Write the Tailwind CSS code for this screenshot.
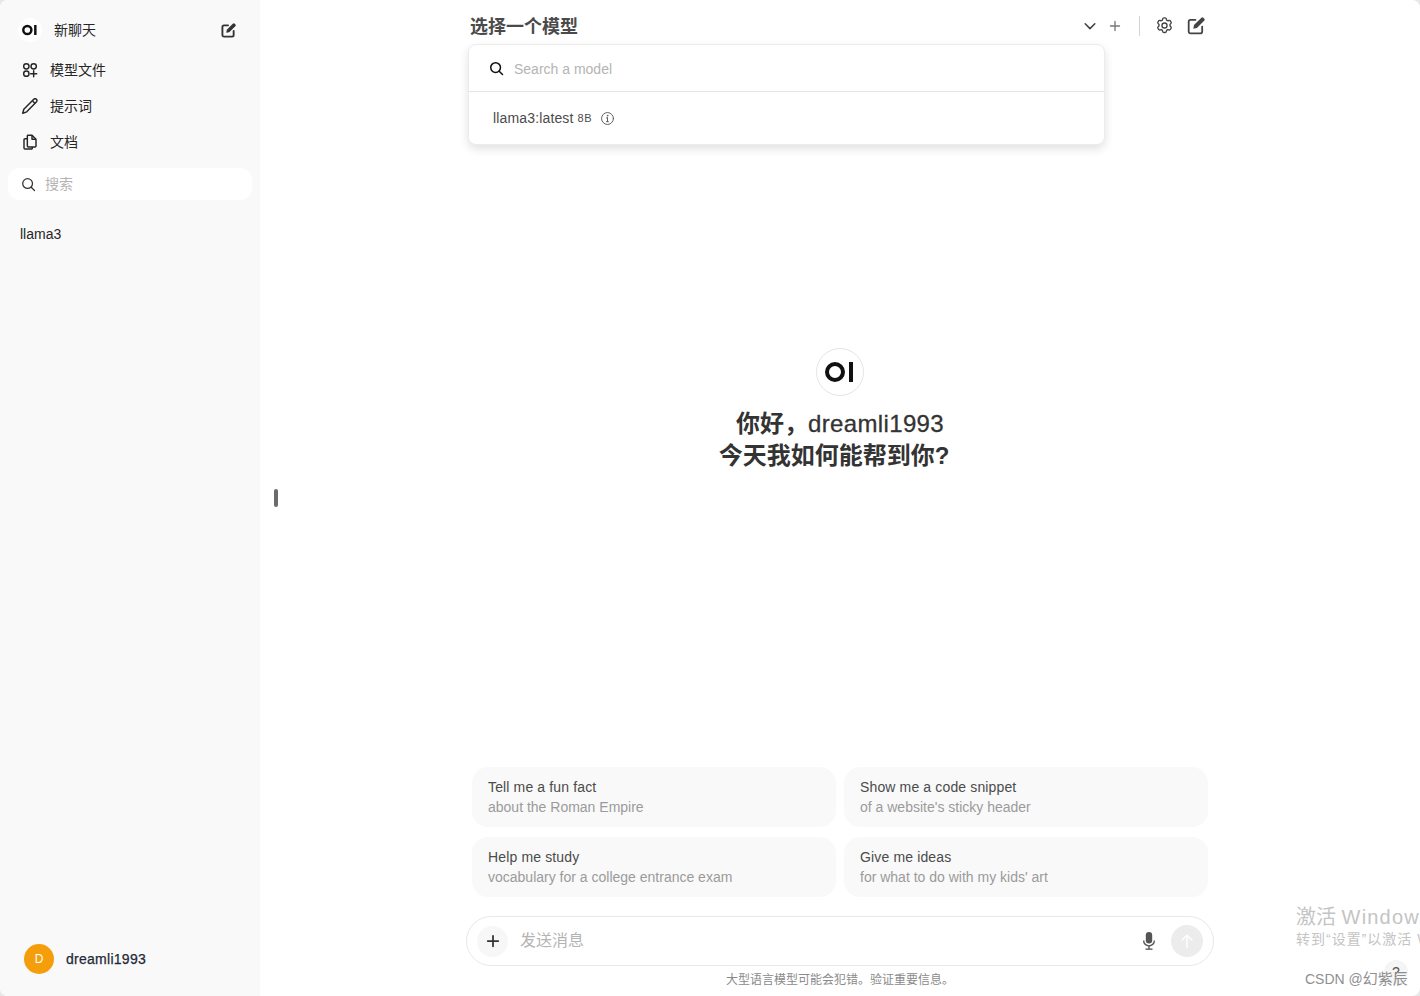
<!DOCTYPE html>
<html lang="en">

<head>
    <meta charset="UTF-8" />
    <title>Open WebUI</title>
    <script src="https://cdn.jsdelivr.net/npm/@tailwindcss/browser@4"></script>
</head>

<body class="bg-[#e8e8e8] h-[996px] w-[1420px] overflow-hidden font-['Liberation_Sans','Noto_Sans_CJK_SC',sans-serif]">
    <div class="relative flex h-full w-full overflow-hidden rounded-lg bg-white text-[#262626]">

        <!-- sidebar -->
        <aside class="flex h-full w-[260px] shrink-0 flex-col bg-[#f9f9f9] px-2 text-sm">
            <div class="mt-[14px] flex h-8 items-center pl-[10px] pr-[16px]">
                <div class="flex h-6 w-6 items-center justify-center rounded-full bg-white">
                    <svg class="h-[12px] w-[16px]" viewBox="0 0 30 22" fill="none" stroke="#111" stroke-width="4.6">
                        <circle cx="10" cy="11" r="7.6" />
                        <path d="M25 1.500v19" />
                    </svg>
                </div>
                <span class="ml-[12px] flex-1">新聊天</span>
                <svg class="h-[15px] w-[15px]" viewBox="0 0 16 16">
                    <path d="M7.500 2.500H3.200A1.700 1.700 0 0 0 1.500 4.200v8.600a1.700 1.700 0 0 0 1.700 1.700h8.600a1.700 1.700 0 0 0 1.700-1.700V8.500" fill="none" stroke="#333" stroke-width="2" stroke-linecap="round" />
                    <path d="M12.600 0.800a1.500 1.500 0 0 1 2.100 0l.5.5a1.500 1.500 0 0 1 0 2.100L8.800 9.800 5.600 10.400l.6-3.200z" fill="#333" />
                </svg>
            </div>

            <nav class="mt-[6px] flex flex-col">
                <a class="flex h-9 items-center gap-[12px] px-[14px]">
                    <svg class="h-4 w-4" viewBox="0 0 24 24" fill="none" stroke="#262626" stroke-width="2.2" stroke-linecap="round">
                        <circle cx="6.500" cy="6.500" r="4" />
                        <circle cx="17.500" cy="6.500" r="4" />
                        <circle cx="6.500" cy="17.500" r="4" />
                        <path d="M17.500 13v9M13 17.500h9" />
                    </svg>
                    <span>模型文件</span>
                </a>
                <a class="flex h-9 items-center gap-[12px] px-[14px]">
                    <svg class="h-4 w-4" viewBox="1 1 22 22" fill="none" stroke="#262626" stroke-width="2" stroke-linejoin="round">
                        <path d="M17.500 2.500a2.500 2.500 0 0 1 3.500 3.500L7.500 20 2 22l1.500-5.500z" />
                        <path d="M15.500 5l3.500 3.500" />
                    </svg>
                    <span>提示词</span>
                </a>
                <a class="flex h-9 items-center gap-[12px] px-[14px]">
                    <svg class="h-4 w-4" viewBox="0 0 24 24" fill="none" stroke="#262626" stroke-width="2.200" stroke-linejoin="round">
                        <path d="M9 2h6l6 6v10a1.500 1.500 0 0 1-1.500 1.500h-10A1.500 1.500 0 0 1 8 18V3a1 1 0 0 1 1-1z" />
                        <path d="M15 2v6h6" />
                        <path d="M8 7H4.500A1.500 1.500 0 0 0 3 8.500V21a1.500 1.500 0 0 0 1.500 1.500H14a1.500 1.500 0 0 0 1.500-1.500v-1.500" />
                    </svg>
                    <span>文档</span>
                </a>
            </nav>

            <div class="mt-[8px] flex h-8 items-center gap-[9px] rounded-xl bg-white px-[13px]">
                <svg class="h-[15px] w-[15px]" viewBox="0 0 20 20" fill="none" stroke="#333" stroke-width="1.700" stroke-linecap="round">
                    <circle cx="8.800" cy="8.800" r="6.500" />
                    <path d="M13.600 13.600L18 18" />
                </svg>
                <span class="text-[#b4b4b4]">搜索</span>
            </div>

            <div class="mt-[24px] px-[12px] leading-5">llama3</div>

            <div class="mt-auto mb-[22px] flex items-center gap-[12px] pl-[16px]">
                <div class="flex h-[30px] w-[30px] items-center justify-center rounded-full bg-[#f59e0b] text-xs text-white">D</div>
                <span class="font-medium tracking-[0.27px] text-[#1f2937] [-webkit-text-stroke:0.25px_#1f2937]">dreamli1993</span>
            </div>
        </aside>

        <!-- main column -->
        <main class="relative flex h-full flex-1 flex-col items-center">
            <div class="absolute left-[14px] top-[489px] h-[18px] w-1 rounded-full bg-[#6b6b6b]"></div>

            <header class="flex h-[52px] w-[740px] shrink-0 items-center justify-between pb-[1px] pr-[5px]">
                <span class="mt-[2px] text-lg font-bold text-[#4a4a4a]">选择一个模型</span>
                <div class="flex items-center">
                    <svg class="h-[14px] w-[14px]" viewBox="0 0 16 16" fill="none" stroke="#444" stroke-width="1.800" stroke-linecap="round" stroke-linejoin="round">
                        <path d="M2.500 5.500L8 11l5.500-5.500" />
                    </svg>
                    <svg class="ml-[12px] h-3 w-3" viewBox="0 0 16 16" fill="none" stroke="#777" stroke-width="1.800" stroke-linecap="round">
                        <path d="M8 2v12M2 8h12" />
                    </svg>
                    <div class="ml-[18px] h-5 w-px bg-[#d4d4d4]"></div>
                    <svg class="ml-[15px] h-[19px] w-[19px]" viewBox="0 0 24 24" fill="none" stroke="#444" stroke-width="1.700" stroke-linejoin="round">
                        <path d="M9.600 3.900c.1-.9.900-1.600 1.800-1.600h1.200c.9 0 1.700.7 1.800 1.600l.2 1.200c.6.300 1.100.6 1.600 1l1.200-.4c.9-.3 1.800 0 2.200.8l.6 1c.5.800.3 1.800-.4 2.400l-.9.8c.1.600.1 1.200 0 1.800l.9.800c.7.600.9 1.600.4 2.400l-.6 1c-.4.800-1.300 1.100-2.200.8l-1.200-.4c-.5.400-1 .7-1.600 1l-.2 1.200c-.1.900-.9 1.600-1.800 1.600h-1.200c-.9 0-1.700-.7-1.800-1.600l-.2-1.200c-.6-.3-1.100-.6-1.600-1l-1.200.4c-.9.300-1.800 0-2.200-.8l-.6-1c-.5-.800-.3-1.800.4-2.400l.9-.8c-.1-.6-.1-1.200 0-1.800l-.9-.8c-.7-.6-.9-1.600-.4-2.400l.6-1c.4-.8 1.300-1.100 2.200-.8l1.200.4c.5-.4 1-.7 1.600-1z" />
                        <circle cx="12" cy="12" r="3.200" />
                    </svg>
                    <svg class="ml-[13px] h-[18px] w-[18px]" viewBox="0 0 16 16">
                        <path d="M7.500 2.500H3.200A1.700 1.700 0 0 0 1.500 4.200v8.600a1.700 1.700 0 0 0 1.700 1.700h8.600a1.700 1.700 0 0 0 1.700-1.700V8.500" fill="none" stroke="#444" stroke-width="1.600" stroke-linecap="round" />
                        <path d="M12.600 0.800a1.500 1.500 0 0 1 2.100 0l.5.5a1.500 1.500 0 0 1 0 2.100L8.800 9.800 5.600 10.400l.6-3.200z" fill="#444" />
                    </svg>
                </div>
            </header>

            <!-- model dropdown -->
            <div class="absolute left-[208px] top-[44px] w-[637px] rounded-lg border border-[#ececec] bg-white shadow-[0_4px_10px_rgba(0,0,0,0.12)]">
                <div class="flex h-[47px] items-center gap-[10px] border-b border-[#e5e5e5] px-5">
                    <svg class="h-[15px] w-[15px]" viewBox="0 0 20 20" fill="none" stroke="#111" stroke-width="2" stroke-linecap="round">
                        <circle cx="8.800" cy="8.800" r="6.500" />
                        <path d="M13.600 13.600L18 18" />
                    </svg>
                    <span class="mt-[2px] text-sm text-[#b4b4b4]">Search a model</span>
                </div>
                <div class="flex h-[52px] items-center px-6 text-sm text-[#4b4b4b]">
                    <span class="tracking-[0.15px]">llama3:latest</span>
                    <span class="ml-1 mt-[2px] text-[11px] tracking-[0.5px]">8B</span>
                    <svg class="ml-[8px] h-[15px] w-[15px]" viewBox="0 0 24 24" fill="none" stroke="#555" stroke-width="1.500" stroke-linecap="round">
                        <circle cx="12" cy="12" r="9.500" />
                        <path d="M12 11v6M10.500 11H12M10.500 17h3" />
                        <circle cx="12" cy="7.500" r="0.600" />
                    </svg>
                </div>
            </div>

            <!-- greeting -->
            <section class="mt-[296px] flex flex-col items-center text-2xl leading-8 text-[#333]">
                <div class="mb-[12px] flex h-12 w-12 items-center justify-center rounded-full border border-[#e5e5e5] bg-white">
                    <svg class="h-[22px] w-[30px]" viewBox="0 0 30 22" fill="none" stroke="#111" stroke-width="4">
                        <circle cx="10" cy="11" r="8" />
                        <path d="M26 1v20" />
                    </svg>
                </div>
                <div class="font-medium"><span class="font-bold">你好，</span><span class="tracking-[0.36px] [-webkit-text-stroke:0.3px_#333]">dreamli1993</span></div>
                <div class="pr-[12px] font-bold">今天我如何能帮到你?</div>
            </section>

            <!-- suggestions -->
            <section class="mt-auto grid w-[736px] grid-cols-2 gap-x-2 gap-y-[10px] text-sm leading-5">
                <div class="h-[60px] rounded-2xl bg-[#f9f9f9] px-4 py-[10px]">
                    <div class="tracking-[0.14px] text-[#4b4b4b]">Tell me a fun fact</div>
                    <div class="text-[#9b9b9b]">about the Roman Empire</div>
                </div>
                <div class="h-[60px] rounded-2xl bg-[#f9f9f9] px-4 py-[10px]">
                    <div class="tracking-[0.14px] text-[#4b4b4b]">Show me a code snippet</div>
                    <div class="text-[#9b9b9b]">of a website's sticky header</div>
                </div>
                <div class="h-[60px] rounded-2xl bg-[#f9f9f9] px-4 py-[10px]">
                    <div class="tracking-[0.14px] text-[#4b4b4b]">Help me study</div>
                    <div class="text-[#9b9b9b]">vocabulary for a college entrance exam</div>
                </div>
                <div class="h-[60px] rounded-2xl bg-[#f9f9f9] px-4 py-[10px]">
                    <div class="tracking-[0.14px] text-[#4b4b4b]">Give me ideas</div>
                    <div class="text-[#9b9b9b]">for what to do with my kids' art</div>
                </div>
            </section>

            <!-- message box -->
            <div class="mt-[19px] flex h-[50px] w-[748px] shrink-0 items-center rounded-[25px] border border-[#e8e8e8] bg-white pl-[10px] pr-[10px]">
                <div class="flex h-[31px] w-[31px] items-center justify-center rounded-full bg-[#f7f7f7]">
                    <svg class="h-[14px] w-[14px]" viewBox="0 0 16 16" fill="none" stroke="#333" stroke-width="2" stroke-linecap="round">
                        <path d="M8 2v12M2 8h12" />
                    </svg>
                </div>
                <span class="ml-[12px] flex-1 text-base text-[#b4b4b4]">发送消息</span>
                <svg class="h-[20px] w-[20px]" viewBox="0 0 20 20" fill="#555">
                    <rect x="6.800" y="1" width="6.400" height="11.500" rx="3.200" />
                    <path d="M4 9.500h1.300a4.700 4.700 0 0 0 9.400 0H16a6 6 0 0 1-5.300 5.900V18h-1.400v-2.600A6 6 0 0 1 4 9.500z" />
                    <rect x="6.500" y="17.500" width="7" height="1.300" />
                </svg>
                <div class="ml-[12px] flex h-8 w-8 items-center justify-center rounded-full bg-[#ececec]">
                    <svg class="h-[18px] w-[18px]" viewBox="0 0 20 20" fill="none" stroke="#fff" stroke-width="1.600" stroke-linecap="round" stroke-linejoin="round">
                        <path d="M10 17V3.500M4.500 9L10 3.500 15.500 9" />
                    </svg>
                </div>
            </div>
            <div class="flex h-[30px] shrink-0 items-center pb-[2px] text-xs text-[#8a8a8a]">大型语言模型可能会犯错。验证重要信息。</div>
        </main>

        <!-- windows watermark and csdn tag lie over the page -->
        <div class="absolute left-[1296px] top-[903px] w-[124px] overflow-hidden whitespace-nowrap text-[#c4c4c4]">
            <div class="text-[20px] leading-7">激活 <span class="tracking-[1.2px]">Windows</span></div>
            <div class="mt-[-2px] text-sm leading-5 tracking-[1px]">转到“设置”以激活 Windows。</div>
        </div>
        <div class="absolute left-[1384px] top-[960px] flex h-6 w-6 items-center justify-center rounded-full bg-[#f5f5f5] text-sm text-[#555]">?</div>
        <div class="absolute left-[1305px] top-[969px] text-sm leading-5 text-[#8f8f8f]">CSDN @<span class="text-[15px]">幻紫辰</span></div>
    </div>
</body>

</html>
